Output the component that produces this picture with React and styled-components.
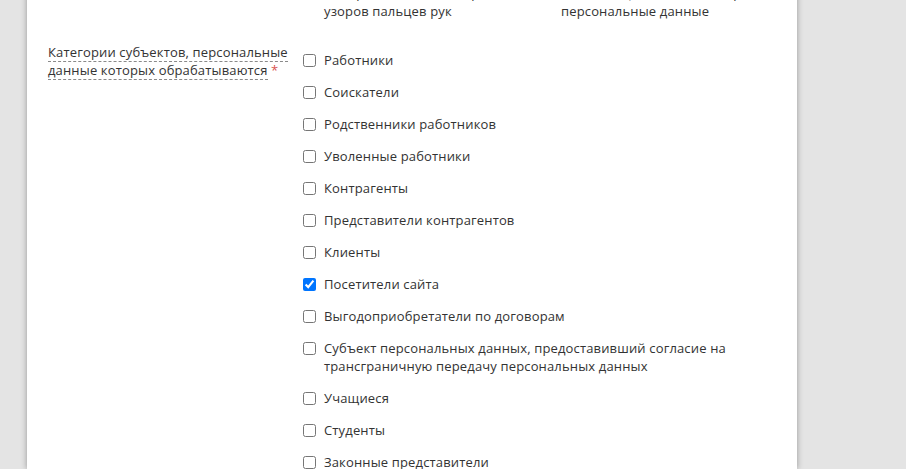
import React from 'react'
import styled, { createGlobalStyle } from 'styled-components';

const GlobalStyle = createGlobalStyle`
    html, body {
        margin: 0;
        padding: 0;
        background: #e4e4e4;
        overflow: hidden;
    }
    body {
        font-family: "Open Sans", "Liberation Sans", sans-serif;
        font-size: 13px;
        letter-spacing: 0.15px;
        color: #333;
    }
`

const biometric = [
    ['Фотографическое', 'изображение лица'],
    ['Иные биометрические', 'данные субъекта'],
    ['Изображения папиллярных', 'узоров пальцев рук'],
    ['Иные специальные категории', 'персональные данные'],
];

const subjects = [
    { text: 'Работники' },
    { text: 'Соискатели' },
    { text: 'Родственники работников' },
    { text: 'Уволенные работники' },
    { text: 'Контрагенты' },
    { text: 'Представители контрагентов' },
    { text: 'Клиенты' },
    { text: 'Посетители сайта', checked: true },
    { text: 'Выгодоприобретатели по договорам' },
    { text: 'Субъект персональных данных, предоставивший согласие на трансграничную передачу персональных данных' },
    { text: 'Учащиеся' },
    { text: 'Студенты' },
    { text: 'Законные представители' },
    { text: 'Пациенты' },
];

const App = () => {
    return (
        <>
            <GlobalStyle />
            <Page>
                <Panel>
                    <Field>
                        <Label>
                            <span>Биометрические персональные данные</span>
                        </Label>
                        <Columns>
                            {biometric.map(([a, b]) => (
                                <Option key={a}>
                                    <input type="checkbox" />
                                    <span>{a}<br />{b}</span>
                                </Option>
                            ))}
                        </Columns>
                    </Field>
                    <Field>
                        <Label>
                            <span>Категории субъектов, персональные данные которых обрабатываются</span>
                            {' '}<Required>*</Required>
                        </Label>
                        <List>
                            {subjects.map((s) => (
                                <Option key={s.text}>
                                    <input type="checkbox" defaultChecked={!!s.checked} />
                                    <span>{s.text}</span>
                                </Option>
                            ))}
                        </List>
                    </Field>
                </Panel>
            </Page>
        </>
    )
}

export default App

const Page = styled.div`
    display: flex;
    padding-left: 27px;
    height: 469px;
    overflow: hidden;
`
const Panel = styled.div`
    width: 770px;
    flex-shrink: 0;
    background: #fff;
    box-shadow: 0 0 6px rgba(0, 0, 0, 0.35);
    margin-top: -93px;
    padding: 20px 21px 40px 21px;
    box-sizing: border-box;
    display: flex;
    flex-direction: column;
    gap: 16px;
`
const Field = styled.div`
    display: grid;
    grid-template-columns: 251px 1fr;
    align-items: start;
`
const Label = styled.div`
    line-height: 18px;
    padding-right: 4px;
    span:first-child{
        border-bottom: 1px dashed #8a8a8a;
    }
`
const Required = styled.span`
    color: #d9534f;
`
const Columns = styled.div`
    display: grid;
    grid-template-columns: 237px 237px;
`
const List = styled.div`
    display: flex;
    flex-direction: column;
    padding: 1px 40px 0 0;
`
const Option = styled.label`
    display: flex;
    align-items: flex-start;
    padding: 7px 0;
    line-height: 18px;
    input{
        width: 13px;
        height: 13px;
        margin: 3px 8px 0 4px;
        flex-shrink: 0;
    }
`
